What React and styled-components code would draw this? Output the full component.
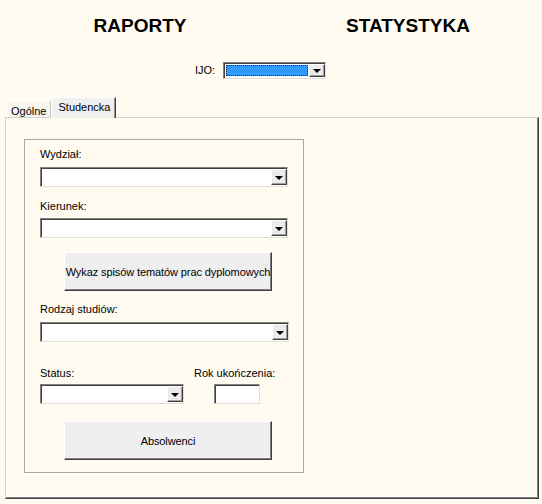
import React from 'react';
import styled, { createGlobalStyle } from 'styled-components';

const GlobalStyle = createGlobalStyle`
  html, body {
    margin: 0;
    padding: 0;
    background: #fffbf0;
  }
  body {
    font-family: "Liberation Sans", Arial, sans-serif;
    font-size: 11px;
    color: #000;
  }
`;

const Page = styled.div`
  width: 542px;
  height: 504px;
  padding: 15px 0 0 5px;
  box-sizing: border-box;
  background: #fffbf0;
`;

const Header = styled.div`
  display: grid;
  grid-template-columns: 268px 268px;
  padding-left: 1px;
`;

const Title = styled.h1`
  margin: 0;
  text-align: center;
  font-size: 19px;
  line-height: 22px;
  font-weight: bold;
`;

const IjoRow = styled.div`
  display: flex;
  align-items: center;
  gap: 8px;
  margin-top: 25px;
  padding-left: 190px;
`;

const Label = styled.span`
  font-size: 11px;
  line-height: 13px;
  white-space: nowrap;
`;

const ComboBox = styled.div`
  display: flex;
  align-items: stretch;
  box-sizing: border-box;
  width: ${p => p.$width}px;
  height: ${p => p.$height || 20}px;
  padding: 1px 0 1px 1px;
  background: #fff;
  border-style: solid;
  border-width: 1px;
  border-color: #808080 #e2e0d8 #e2e0d8 #808080;
  box-shadow: inset 1px 1px 0 #404040;
`;

const ComboText = styled.div`
  flex: 1;
  margin: ${p => (p.$selected ? '1px' : '0')};
  background: ${p => (p.$selected ? '#3399ff' : 'transparent')};
  border: ${p => (p.$selected ? '1px dotted #2a2a2a' : 'none')};
`;

const DropButton = styled.div`
  display: flex;
  align-items: center;
  justify-content: center;
  width: 16px;
  box-sizing: border-box;
  background: #ebebeb;
  border-style: solid;
  border-width: 1px;
  border-color: #fff #404040 #404040 #fff;
  box-shadow: inset -1px -1px 0 #a0a0a0;
`;

const Arrow = styled.span`
  width: 0;
  height: 0;
  border-left: 4px solid transparent;
  border-right: 4px solid transparent;
  border-top: 4px solid #000;
  margin-top: 1px;
`;

const Combo = ({ width, height, selected }) => (
  <ComboBox $width={width} $height={height}>
    <ComboText $selected={selected} />
    <DropButton>
      <Arrow />
    </DropButton>
  </ComboBox>
);

const TabStrip = styled.div`
  display: flex;
  align-items: flex-end;
  margin-top: 18px;
  padding-left: 1px;
  height: 20px;
  position: relative;
  z-index: 1;
`;

const Tab = styled.div`
  box-sizing: border-box;
  height: ${p => (p.$active ? 21 : 17)}px;
  padding: ${p => (p.$active ? '3px 5px 0 6px' : '4px 4px 0 4px')};
  margin-bottom: ${p => (p.$active ? -1 : 0)}px;
  background: ${p => (p.$active ? '#f0f0f0' : '#f7f5ee')};
  border-style: solid;
  border-width: 1px 1px 0 1px;
  border-color: #fff ${p => (p.$active ? '#404040' : '#c8c6be')} transparent #fff;
  box-shadow: ${p => (p.$active ? 'inset -1px 0 0 #909090' : 'none')};
  line-height: 13px;
`;

const Panel = styled.div`
  box-sizing: border-box;
  width: 534px;
  height: 382px;
  padding: 21px 0 0 18px;
  border-style: solid;
  border-width: 1px;
  border-color: #d6d4cc #404040 #404040 #d6d4cc;
  box-shadow: inset -1px -1px 0 #808080, 1px 1px 0 #fff;
`;

const Frame = styled.div`
  box-sizing: border-box;
  width: 280px;
  height: 334px;
  padding: 8px 0 0 15px;
  border: 1px solid #a8a8a0;
  box-shadow: inset 1px 1px 0 #fff, 1px 1px 0 #fff;
`;

const FieldLabel = styled.div`
  line-height: 13px;
  margin-top: ${p => p.$gap || 0}px;
  margin-bottom: ${p => p.$below || 6}px;
  white-space: nowrap;
`;

const ActionButton = styled.button`
  display: flex;
  align-items: center;
  justify-content: center;
  box-sizing: border-box;
  width: 208px;
  height: 39px;
  margin: ${p => p.$gap}px 0 0 24px;
  padding: 0;
  white-space: nowrap;
  overflow: visible;
  font-family: "Liberation Sans", Arial, sans-serif;
  font-size: 11px;
  letter-spacing: -0.1px;
  color: #000;
  background: #efefef;
  border-style: solid;
  border-width: 1px;
  border-color: #fff #404040 #404040 #fff;
  box-shadow: inset -1px -1px 0 #808080;
`;

const BottomRow = styled.div`
  display: flex;
  margin-top: 25px;
`;

const Column = styled.div`
  width: ${p => p.$width}px;
  display: flex;
  flex-direction: column;
  align-items: flex-start;
`;

const TextInput = styled.div`
  box-sizing: border-box;
  width: 46px;
  height: 20px;
  margin-left: 20px;
  background: #fff;
  border-style: solid;
  border-width: 1px;
  border-color: #808080 #e2e0d8 #e2e0d8 #808080;
  box-shadow: inset 1px 1px 0 #404040;
`;

export default function App() {
  return (
    <>
      <GlobalStyle />
      <Page>
        <Header>
          <Title>RAPORTY</Title>
          <Title>STATYSTYKA</Title>
        </Header>
        <IjoRow>
          <Label>IJO:</Label>
          <Combo width={103} height={17} selected />
        </IjoRow>
        <TabStrip>
          <Tab>Ogólne</Tab>
          <Tab $active>Studencka</Tab>
        </TabStrip>
        <Panel>
          <Frame>
            <FieldLabel>Wydział:</FieldLabel>
            <Combo width={248} />
            <FieldLabel $gap={13} $below={5}>Kierunek:</FieldLabel>
            <Combo width={248} />
            <ActionButton $gap={14}>Wykaz spisów tematów prac dyplomowych</ActionButton>
            <FieldLabel $gap={12}>Rodzaj studiów:</FieldLabel>
            <Combo width={249} />
            <BottomRow>
              <Column $width={154}>
                <FieldLabel $below={4}>Status:</FieldLabel>
                <Combo width={144} />
              </Column>
              <Column $width={80}>
                <FieldLabel $below={4}>Rok ukończenia:</FieldLabel>
                <TextInput />
              </Column>
            </BottomRow>
            <ActionButton $gap={17}>Absolwenci</ActionButton>
          </Frame>
        </Panel>
      </Page>
    </>
  );
}
